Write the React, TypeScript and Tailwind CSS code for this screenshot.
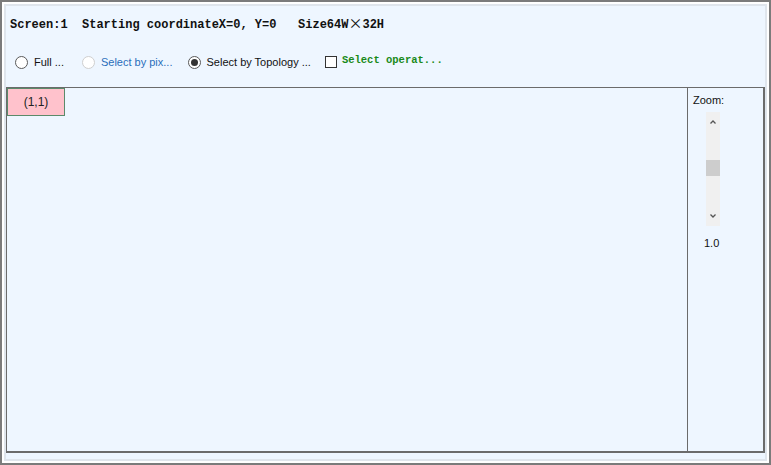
import React from 'react';

const Radio: React.FC<{ label: string; checked?: boolean; disabled?: boolean }> = ({ label, checked, disabled }) => {
    return (
        <div className="flex items-center gap-[6px]">
            <span className={`w-[13px] h-[13px] rounded-full border bg-white flex items-center justify-center ${disabled ? 'border-[#cfcfcf]' : 'border-[#5a5a5a]'}`}>
                {checked && <span className="w-[7px] h-[7px] rounded-full bg-[#333]" />}
            </span>
            <span className={`text-[11px] leading-4 ${disabled ? 'text-[#2a6ebb]' : 'text-[#111]'}`}>{label}</span>
        </div>
    );
};

const App: React.FC = () => {
    return (
        <div className="w-[771px] h-[465px] border-2 border-[#7b7b7b] bg-white p-[2px] box-border" style={{ fontFamily: '"Liberation Sans", Arial, sans-serif' }}>
            <div className="h-full border-2 border-[#dfe5ec] bg-[#eef6ff] flex flex-col">
                {/* header */}
                <div className="h-[81px] flex flex-col">
                    <div className="pt-[8px] pl-[4px] h-4 leading-4 text-[12px] font-bold text-[#111] whitespace-pre box-content" style={{ fontFamily: '"Liberation Mono", monospace' }}>
                        {'Screen:1  Starting coordinateX=0, Y=0   Size64W'}
                        <span className="font-normal text-[14px]" style={{ fontFamily: '"Noto Sans CJK SC", sans-serif' }}>×</span>
                        {'32H'}
                    </div>
                    <div className="mt-[24px] h-4 flex items-center pl-[9px]">
                        <Radio label="Full ..." />
                        <div className="ml-[18px]"><Radio label="Select by pix..." disabled /></div>
                        <div className="ml-[15px]"><Radio label="Select by Topology ..." checked /></div>
                        <div className="ml-[14px] flex items-center gap-[5px]">
                            <span className="w-[12px] h-[12px] border border-[#333] bg-white" />
                            <span className="text-[10.5px] font-bold text-[#1a8a1a] -mt-[3px]" style={{ fontFamily: '"Liberation Mono", monospace' }}>Select operat...</span>
                        </div>
                    </div>
                </div>
                {/* main */}
                <div className="flex h-[366px]">
                    <div className="flex-1 border-l border-t border-b-2 border-[#6b6b6b]">
                        <div className="w-[58px] h-[28px] bg-[#ffc2cc] border border-[#5b8a6a] flex items-center justify-center text-[12px] text-[#222]">
                            (1,1)
                        </div>
                    </div>
                    <div className="w-[78px] border-l border-t border-r-2 border-b-2 border-[#6b6b6b] flex flex-col pl-[5px] pt-[4px]">
                        <div className="text-[11px] leading-4 text-[#111]">Zoom:</div>
                        <div className="ml-[13px] mt-[4px] w-[14px] h-[114px] bg-[#f0f0f0] flex flex-col items-center">
                            <svg width="14" height="16" viewBox="0 0 14 16" className="mt-[2px]">
                                <path d="M4.5 9.5 L7 7 L9.5 9.5" stroke="#555" strokeWidth="1.3" fill="none" />
                            </svg>
                            <div className="mt-[30px] w-[14px] h-[16px] bg-[#cdcdcd]" />
                            <div className="flex-1" />
                            <svg width="14" height="16" viewBox="0 0 14 16" className="mb-[2px]">
                                <path d="M4.5 6.5 L7 9 L9.5 6.5" stroke="#555" strokeWidth="1.3" fill="none" />
                            </svg>
                        </div>
                        <div className="ml-[11px] mt-[9px] text-[11px] leading-4 text-[#111]">1.0</div>
                    </div>
                </div>
            </div>
        </div>
    );
};

export default App;
